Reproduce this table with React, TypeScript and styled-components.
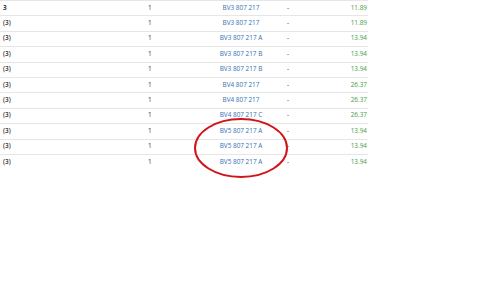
import React from 'react';
import styled, { createGlobalStyle } from 'styled-components';

const rows = [
    { pos: '3', qty: '1', part: 'BV3 807 217', note: '-', price: '11.89' },
    { pos: '(3)', qty: '1', part: 'BV3 807 217', note: '-', price: '11.89' },
    { pos: '(3)', qty: '1', part: 'BV3 807 217 A', note: '-', price: '13.94' },
    { pos: '(3)', qty: '1', part: 'BV3 807 217 B', note: '-', price: '13.94' },
    { pos: '(3)', qty: '1', part: 'BV3 807 217 B', note: '-', price: '13.94' },
    { pos: '(3)', qty: '1', part: 'BV4 807 217', note: '-', price: '26.37' },
    { pos: '(3)', qty: '1', part: 'BV4 807 217', note: '-', price: '26.37' },
    { pos: '(3)', qty: '1', part: 'BV4 807 217 C', note: '-', price: '26.37' },
    { pos: '(3)', qty: '1', part: 'BV5 807 217 A', note: '-', price: '13.94' },
    { pos: '(3)', qty: '1', part: 'BV5 807 217 A', note: '-', price: '13.94' },
    { pos: '(3)', qty: '1', part: 'BV5 807 217 A', note: '-', price: '13.94' },
];

const GlobalStyle = createGlobalStyle`
    html, body {
        margin: 0;
        padding: 0;
        background: #ffffff;
    }
    body {
        width: 500px;
        height: 281px;
        overflow: hidden;
        font-family: 'Open Sans', 'Liberation Sans', sans-serif;
    }
`;

export default function App() {
    return (
        <>
            <GlobalStyle />
            <Page>
                <Table>
                    {rows.map((v, i) => (
                        <Line key={i}>
                            <Pos $bold={i === 0}>{v.pos}</Pos>
                            <Qty>{v.qty}</Qty>
                            <Part>{v.part}</Part>
                            <Note>{v.note}</Note>
                            <Price>{v.price}</Price>
                        </Line>
                    ))}
                    <Marker viewBox="0 0 96 62">
                        <ellipse cx="48" cy="31" rx="46" ry="29" fill="none" stroke="#d0151b" strokeWidth="2" />
                    </Marker>
                </Table>
            </Page>
        </>
    );
}

const Page = styled.div`
    width: 500px;
    height: 281px;
`;

const Table = styled.div`
    position: relative;
    width: 368px;
    border-top: 1px solid #e6e6e6;
`;

const Line = styled.div`
    height: 14.4px;
    padding-bottom: 1px;
    box-sizing: content-box;
    display: grid;
    grid-template-columns: 145px 55px 82px 1fr auto;
    align-items: center;
    border-bottom: 1px solid #e6e6e6;
    font-size: 6.4px;
    color: #333333;
    margin-top: -1px;

    &:last-of-type {
        border-bottom: none;
    }
`;

const Pos = styled.div<{ $bold: boolean }>`
    padding-left: 3px;
    font-weight: ${(p) => (p.$bold ? 700 : 600)};
`;

const Qty = styled.div`
    padding-left: 3px;
`;

const Part = styled.div`
    text-align: center;
    color: #3470b3;
`;

const Note = styled.div`
    padding-left: 5px;
`;

const Price = styled.div`
    padding-right: 1px;
    text-align: right;
    color: #4c9a3f;
`;

const Marker = styled.svg`
    position: absolute;
    left: 193px;
    top: 116px;
    width: 96px;
    height: 62px;
`;
